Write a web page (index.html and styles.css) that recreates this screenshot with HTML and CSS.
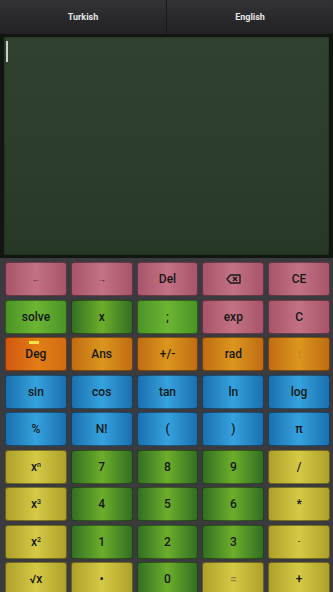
FILE: index.html
```html
<!DOCTYPE html>
<html>
<head>
<meta charset="utf-8">
<link rel="stylesheet" href="styles.css">
</head>
<body>
<div class="app">
  <div class="tabs">
    <div class="tab">Turkish</div>
    <div class="tab tab-right">English</div>
  </div>
  <div class="screen-wrap">
    <div class="screen"><span class="cursor"></span></div>
  </div>
  <div class="keypad">
    <div class="key pink"><span class="small">←</span></div>
    <div class="key pink"><span class="small">→</span></div>
    <div class="key pink">Del</div>
    <div class="key pink"><svg class="bksp" width="15" height="10" viewBox="0 0 15 10"><path d="M4.5 1 H14 V9 H4.5 L1 5 Z" fill="none" stroke="#1a1a1a" stroke-width="1.4" stroke-linejoin="round"/><path d="M7 3 L11 7 M11 3 L7 7" stroke="#1a1a1a" stroke-width="1.4"/></svg></div>
    <div class="key pink">CE</div>

    <div class="key lgreen">solve</div>
    <div class="key green">x</div>
    <div class="key lgreen">;</div>
    <div class="key pink">exp</div>
    <div class="key pink">C</div>

    <div class="key deg">Deg<span class="ind"></span></div>
    <div class="key orange">Ans</div>
    <div class="key orange">+/-</div>
    <div class="key orange">rad</div>
    <div class="key orange faint">↑</div>

    <div class="key blue">sin</div>
    <div class="key blue">cos</div>
    <div class="key blue">tan</div>
    <div class="key blue">ln</div>
    <div class="key blue">log</div>

    <div class="key blue">%</div>
    <div class="key blue">N!</div>
    <div class="key blue">(</div>
    <div class="key blue">)</div>
    <div class="key blue">π</div>

    <div class="key yellow">x<sup>n</sup></div>
    <div class="key green">7</div>
    <div class="key green">8</div>
    <div class="key green">9</div>
    <div class="key yellow">/</div>

    <div class="key yellow">x<sup>3</sup></div>
    <div class="key green">4</div>
    <div class="key green">5</div>
    <div class="key green">6</div>
    <div class="key yellow">*</div>

    <div class="key yellow">x<sup>2</sup></div>
    <div class="key green">1</div>
    <div class="key green">2</div>
    <div class="key green">3</div>
    <div class="key yellow"><span class="small">-</span></div>

    <div class="key yellow">√x</div>
    <div class="key yellow">•</div>
    <div class="key green">0</div>
    <div class="key yellow faintY">=</div>
    <div class="key yellow">+</div>
  </div>
</div>
</body>
</html>
```

FILE: styles.css
```css
html, body {
  margin: 0;
  padding: 0;
  background: #3a3a3f;
  font-family: Roboto, "Liberation Sans", sans-serif;
}
.app {
  width: 333px;
  height: 592px;
  overflow: hidden;
  display: flex;
  flex-direction: column;
}
.tabs {
  flex-shrink: 0;
  height: 34px;
  display: flex;
  background: linear-gradient(#333336, #28282b 60%, #222224);
}
.tab {
  flex: 1;
  display: flex;
  align-items: center;
  justify-content: center;
  color: #e6e6e6;
  font-size: 9px;
  font-weight: 700;
}
.tab-right {
  border-left: 1px solid #18181a;
}
.screen-wrap {
  flex-shrink: 0;
  background: #111611;
  padding: 3px 4px 3px 4px;
}
.screen {
  height: 218px;
  background: linear-gradient(#30422f, #2c3d2b 60%, #273826);
  position: relative;
  box-shadow: inset 0 0 2px rgba(0,0,0,.5);
}
.cursor {
  position: absolute;
  left: 2px;
  top: 4px;
  width: 2px;
  height: 21px;
  background: #c8cfc6;
}
.keypad {
  flex-shrink: 0;
  background: #3a3a3f;
  padding: 4px 3px 0 5px;
  display: grid;
  grid-template-columns: repeat(5, 1fr);
  grid-auto-rows: 34px;
  column-gap: 4px;
  row-gap: 3.5px;
}
.key {
  position: relative;
  display: flex;
  align-items: center;
  justify-content: center;
  border-radius: 3px;
  border: 1px solid rgba(0,0,0,.4);
  box-sizing: border-box;
  font-size: 12px;
  font-weight: 500;
  color: #161616;
}
.key sup {
  font-size: 7px;
  position: relative;
  top: -2px;
}
.small {
  font-size: 8px;
}
.pink {
  background: linear-gradient(to right, #a8546a, #c27284 50%, #a8546a);
}
.green {
  background: linear-gradient(to right, #336f22, #6cae2b 50%, #336f22);
}
.lgreen {
  background: linear-gradient(to right, #4a9427, #6db532 50%, #4a9427);
}
.orange {
  background: linear-gradient(to right, #c06c12, #dc961e 50%, #c06c12);
}
.deg {
  background: linear-gradient(to right, #d2580e, #e27e16 55%, #d06c12);
}
.ind {
  position: absolute;
  top: 3px;
  left: 23px;
  width: 10px;
  height: 3px;
  background: #f3e34a;
}
.blue {
  background: linear-gradient(to right, #1b70ae, #35a2de 50%, #1b70ae);
}
.yellow {
  background: linear-gradient(to right, #aea12a, #d5c946 50%, #aea12a);
}
.faint {
  color: #a87a3a;
}
.faintY {
  color: #8c8440;
}
.bksp {
  display: block;
}
```
